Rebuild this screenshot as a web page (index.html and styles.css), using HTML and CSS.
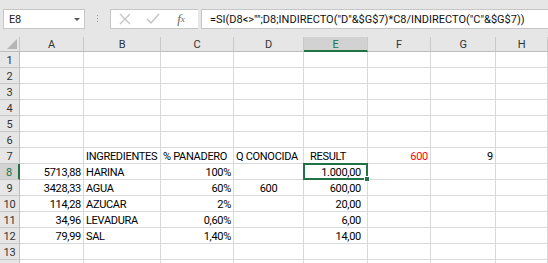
FILE: index.html
```html
<!DOCTYPE html>
<html>
<head>
    <title>Libro1 - Excel</title>
    <link rel="stylesheet" href="styles.css">
</head>
<body>
    <div class="formula-bar">
        <div class="name-box">
            <span>E8</span>
            <span class="caret"></span>
        </div>
        <div class="grip"><i></i><i></i><i></i></div>
        <div class="fx-buttons">
            <span class="btn">
                <svg width="12" height="12" viewBox="0 0 12 12"><path d="M1 1L11 11M11 1L1 11" stroke="#c4c4c4" stroke-width="1.3" fill="none"/></svg>
            </span>
            <span class="btn">
                <svg width="14" height="12" viewBox="0 0 14 12"><path d="M1 6L5 10L13 1" stroke="#c4c4c4" stroke-width="1.5" fill="none"/></svg>
            </span>
            <span class="btn fx">f<sub>x</sub></span>
        </div>
        <div class="formula-input">=SI(D8&lt;&gt;"";D8;INDIRECTO("D"&amp;$G$7)*C8/INDIRECTO("C"&amp;$G$7))</div>
    </div>

    <div class="sheet">
        <!-- column headers -->
        <div class="ch corner"><span class="tri"></span></div>
        <div class="ch">A</div>
        <div class="ch">B</div>
        <div class="ch">C</div>
        <div class="ch">D</div>
        <div class="ch active">E</div>
        <div class="ch">F</div>
        <div class="ch">G</div>
        <div class="ch">H</div>

        <div class="rh">1</div><div class="c"></div><div class="c"></div><div class="c"></div><div class="c"></div><div class="c"></div><div class="c"></div><div class="c"></div><div class="c"></div>
        <div class="rh">2</div><div class="c"></div><div class="c"></div><div class="c"></div><div class="c"></div><div class="c"></div><div class="c"></div><div class="c"></div><div class="c"></div>
        <div class="rh">3</div><div class="c"></div><div class="c"></div><div class="c"></div><div class="c"></div><div class="c"></div><div class="c"></div><div class="c"></div><div class="c"></div>
        <div class="rh">4</div><div class="c"></div><div class="c"></div><div class="c"></div><div class="c"></div><div class="c"></div><div class="c"></div><div class="c"></div><div class="c"></div>
        <div class="rh">5</div><div class="c"></div><div class="c"></div><div class="c"></div><div class="c"></div><div class="c"></div><div class="c"></div><div class="c"></div><div class="c"></div>
        <div class="rh">6</div><div class="c"></div><div class="c"></div><div class="c"></div><div class="c"></div><div class="c"></div><div class="c"></div><div class="c"></div><div class="c"></div>

        <div class="rh">7</div>
        <div class="c"></div>
        <div class="c">INGREDIENTES</div>
        <div class="c">% PANADERO</div>
        <div class="c">Q CONOCIDA</div>
        <div class="c res">RESULT</div>
        <div class="c r red">600</div>
        <div class="c r">9</div>
        <div class="c"></div>

        <div class="rh active">8</div>
        <div class="c r">5713,88</div>
        <div class="c">HARINA</div>
        <div class="c r">100%</div>
        <div class="c"></div>
        <div class="c r num selected">1.000,00<span class="handle"></span></div>
        <div class="c"></div>
        <div class="c"></div>
        <div class="c"></div>

        <div class="rh">9</div>
        <div class="c r">3428,33</div>
        <div class="c">AGUA</div>
        <div class="c r">60%</div>
        <div class="c ctr">600</div>
        <div class="c r num">600,00</div>
        <div class="c"></div>
        <div class="c"></div>
        <div class="c"></div>

        <div class="rh">10</div>
        <div class="c r">114,28</div>
        <div class="c">AZUCAR</div>
        <div class="c r">2%</div>
        <div class="c"></div>
        <div class="c r num">20,00</div>
        <div class="c"></div>
        <div class="c"></div>
        <div class="c"></div>

        <div class="rh">11</div>
        <div class="c r">34,96</div>
        <div class="c">LEVADURA</div>
        <div class="c r">0,60%</div>
        <div class="c"></div>
        <div class="c r num">6,00</div>
        <div class="c"></div>
        <div class="c"></div>
        <div class="c"></div>

        <div class="rh">12</div>
        <div class="c r">79,99</div>
        <div class="c">SAL</div>
        <div class="c r">1,40%</div>
        <div class="c"></div>
        <div class="c r num">14,00</div>
        <div class="c"></div>
        <div class="c"></div>
        <div class="c"></div>

        <div class="rh">13</div><div class="c"></div><div class="c"></div><div class="c"></div><div class="c"></div><div class="c"></div><div class="c"></div><div class="c"></div><div class="c"></div>
        <div class="rh"></div><div class="c"></div><div class="c"></div><div class="c"></div><div class="c"></div><div class="c"></div><div class="c"></div><div class="c"></div><div class="c"></div>
    </div>
</body>
</html>
```

FILE: styles.css
```css
* {
    box-sizing: border-box;
}
html, body {
    margin: 0;
    padding: 0;
    overflow: hidden;
}
body {
    font-family: Roboto, "Liberation Sans", Arial, sans-serif;
    font-size: 11px;
    letter-spacing: -0.3px;
    color: #000;
    background-color: #fff;
}
.formula-bar {
    display: flex;
    align-items: flex-start;
    height: 37px;
    padding: 9px 0 0 3px;
    background-color: #e6e6e6;
}
.name-box {
    display: flex;
    align-items: center;
    justify-content: space-between;
    width: 82px;
    height: 20px;
    padding: 0 4px 0 5px;
    background-color: #fff;
    border: 1px solid #c6c6c6;
    color: #222;
}
.caret {
    width: 0;
    height: 0;
    border-left: 3px solid transparent;
    border-right: 3px solid transparent;
    border-top: 3px solid #555;
}
.grip {
    display: flex;
    flex-direction: column;
    align-items: center;
    gap: 2px;
    width: 25px;
    padding-top: 6px;
}
.grip i {
    display: block;
    width: 1px;
    height: 1px;
    background-color: #9a9a9a;
}
.fx-buttons {
    display: flex;
    align-items: center;
    width: 88px;
    height: 20px;
    background-color: #fff;
    border: 1px solid #c6c6c6;
    border-right: none;
}
.btn {
    display: flex;
    align-items: center;
    justify-content: center;
    width: 28px;
    height: 18px;
}
.fx {
    font-family: "Liberation Serif", serif;
    font-style: italic;
    font-size: 13px;
    letter-spacing: 0;
    color: #666;
}
.fx sub {
    font-size: 9px;
    vertical-align: -1px;
}
.formula-input {
    flex: 1;
    height: 20px;
    margin-left: 3px;
    padding: 3px 0 0 8px;
    background-color: #fff;
    border: 1px solid #c6c6c6;
    border-right: none;
    white-space: nowrap;
    overflow: hidden;
    letter-spacing: 0;
    color: #111;
}
.sheet {
    display: grid;
    grid-template-columns: 20px 64px 77px 73px 70px 64px 63px 65px 1fr;
    grid-template-rows: 15px;
    grid-auto-rows: 16px;
}
.ch, .rh {
    display: flex;
    align-items: center;
    justify-content: center;
    background-color: #e6e6e6;
    color: #333;
    border-right: 1px solid #c8c8c8;
    border-bottom: 1px solid #bdbdbd;
    padding-top: 1px;
}
.rh {
    border-right-color: #bdbdbd;
    border-bottom-color: #c8c8c8;
    padding-top: 2px;
}
.ch.active {
    background-color: #d2d2d2;
    color: #217346;
    border-bottom: 2px solid #217346;
}
.rh.active {
    background-color: #d2d2d2;
    color: #217346;
    border-right: 2px solid #217346;
}
.corner {
    justify-content: flex-end;
    align-items: flex-end;
    padding: 0 2px 2px 0;
}
.tri {
    width: 0;
    height: 0;
    border-left: 10px solid transparent;
    border-bottom: 10px solid #b5b5b5;
}
.c {
    position: relative;
    display: flex;
    align-items: flex-end;
    padding: 0 2px;
    border-right: 1px solid #d9d9d9;
    border-bottom: 1px solid #d9d9d9;
    white-space: nowrap;
    overflow: hidden;
}
.r {
    justify-content: flex-end;
}
.ctr {
    justify-content: center;
}
.num {
    padding-right: 6px;
}
.res {
    padding-left: 6px;
}
.red {
    color: #ff0000;
}
.selected {
    overflow: visible;
}
.selected::after {
    content: "";
    position: absolute;
    top: -1px;
    left: -1px;
    right: -1px;
    bottom: -1px;
    border: 2px solid #217346;
}
.handle {
    position: absolute;
    right: -3px;
    bottom: -3px;
    width: 6px;
    height: 6px;
    background-color: #217346;
    border: 1px solid #fff;
    z-index: 2;
}
```
